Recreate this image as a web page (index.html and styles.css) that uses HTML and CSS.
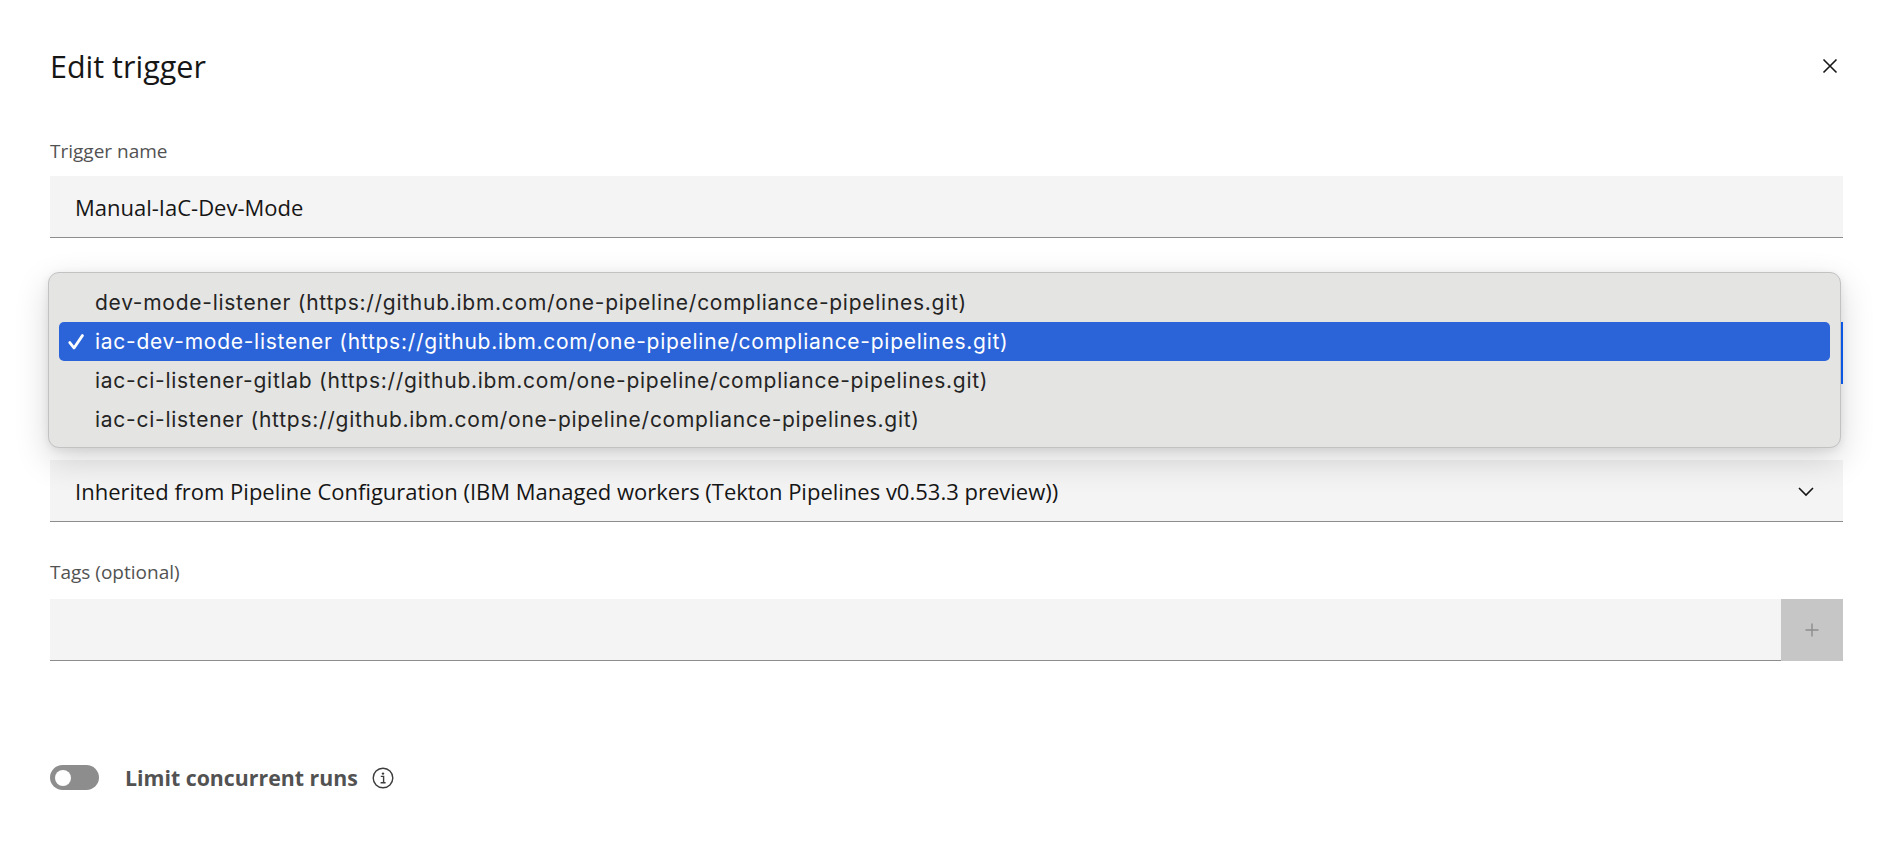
FILE: index.html
```html
<!DOCTYPE html>
<html lang="en">
<head>
<meta charset="utf-8">
<title>Edit trigger</title>
<link rel="stylesheet" href="styles.css">
</head>
<body>
<div class="panel">
  <header class="modal-header">
    <h2 class="title">Edit trigger</h2>
    <button class="close" aria-label="Close">
      <svg width="20" height="20" viewBox="0 0 20 20"><path d="M3.5 3.5 L16.5 16.5 M16.5 3.5 L3.5 16.5" stroke="#161616" stroke-width="1.6" fill="none"/></svg>
    </button>
  </header>

  <div class="group g1">
    <div class="label">Trigger name</div>
    <div class="input">Manual-IaC-Dev-Mode</div>
  </div>

  <div class="group g2">
    <div class="input focused"></div>
  </div>

  <div class="group g3">
    <div class="input select">
      <span>Inherited from Pipeline Configuration (IBM Managed workers (Tekton Pipelines v0.53.3 preview))</span>
      <svg class="chev" width="18" height="12" viewBox="0 0 18 12"><path d="M2 3 L9 10 L16 3" stroke="#161616" stroke-width="1.6" fill="none"/></svg>
    </div>
  </div>

  <div class="group g4">
    <div class="label">Tags (optional)</div>
    <div class="tags">
      <div class="input"></div>
      <button class="add" aria-label="Add tag">
        <svg width="16" height="16" viewBox="0 0 16 16"><path d="M8 1.5 V14.5 M1.5 8 H14.5" stroke="#8d8d8d" stroke-width="1.4" fill="none"/></svg>
      </button>
    </div>
  </div>

  <div class="toggle-row">
    <span class="toggle"><span class="knob"></span></span>
    <span class="toggle-label">Limit concurrent runs</span>
    <svg class="info" width="22" height="22" viewBox="0 0 22 22">
      <circle cx="11" cy="11" r="9.8" stroke="#3d3d3d" stroke-width="1.4" fill="none"/>
      <circle cx="11" cy="6.6" r="1.2" fill="#3d3d3d"/>
      <path d="M8.8 9.4 H11.6 V15.6 M8.6 15.8 H13.6" stroke="#3d3d3d" stroke-width="1.4" fill="none"/>
    </svg>
  </div>

  <div class="popup">
    <div class="option">dev-mode-listener (https://github.ibm.com/one-pipeline/compliance-pipelines.git)</div>
    <div class="option selected"><svg class="check" width="16" height="16" viewBox="0 0 16 16"><path d="M1.8 8.6 L6 14 L14.4 1.6" stroke="#ffffff" stroke-width="2.8" fill="none" stroke-linecap="round" stroke-linejoin="round"/></svg>iac-dev-mode-listener (https://github.ibm.com/one-pipeline/compliance-pipelines.git)</div>
    <div class="option">iac-ci-listener-gitlab (https://github.ibm.com/one-pipeline/compliance-pipelines.git)</div>
    <div class="option">iac-ci-listener (https://github.ibm.com/one-pipeline/compliance-pipelines.git)</div>
  </div>
</div>
</body>
</html>
```

FILE: styles.css
```css
* { box-sizing: border-box; }
html, body {
  margin: 0;
  padding: 0;
  background: #ffffff;
}
body {
  width: 1884px;
  height: 856px;
  overflow: hidden;
  font-family: "Open Sans", "Noto Sans", sans-serif;
  color: #161616;
}
.panel {
  position: relative;
  padding: 0 41px 0 50px;
  height: 856px;
}
.modal-header {
  display: flex;
  justify-content: space-between;
  align-items: flex-start;
  padding-top: 48px;
}
.title {
  margin: 0;
  font-size: 30.5px;
  line-height: 36px;
  font-weight: 400;
  color: #161616;
}
.close {
  margin: 8px 3px 0 0;
  padding: 0;
  border: 0;
  background: none;
  width: 20px;
  height: 20px;
  display: block;
}
.close svg { display: block; }

.label {
  font-size: 19px;
  line-height: 20px;
  color: #525252;
}
.input {
  height: 62px;
  background: #f4f4f4;
  border-bottom: 1px solid #8d8d8d;
  display: flex;
  align-items: center;
  padding-left: 25px;
  font-size: 22px;
  color: #161616;
}
.g1 { margin-top: 57px; }
.g1 .input { margin-top: 15px; }
.g2 { margin-top: 84px; }
.g2 .input.focused {
  outline: 2px solid #0f62fe;
  outline-offset: -2px;
}
.g3 { margin-top: 76px; }
.select {
  justify-content: space-between;
  padding-right: 28px;
}
.chev { display: block; }
.g4 { margin-top: 40px; }
.tags {
  display: flex;
  margin-top: 17px;
}
.tags .input { flex: 1; }
.add {
  width: 62px;
  height: 62px;
  border: 0;
  padding: 0;
  background: #c6c6c6;
  display: flex;
  align-items: center;
  justify-content: center;
}
.add svg { display: block; }

.toggle-row {
  margin-top: 104px;
  display: flex;
  align-items: center;
  height: 25px;
}
.toggle {
  width: 49px;
  height: 25px;
  border-radius: 13px;
  background: #8d8d8d;
  display: flex;
  align-items: center;
  padding-left: 5px;
}
.knob {
  width: 16px;
  height: 16px;
  border-radius: 50%;
  background: #ffffff;
}
.toggle-label {
  margin-left: 26px;
  font-size: 21.3px;
  font-weight: 700;
  color: #525252;
}
.info {
  margin-left: 14px;
  display: block;
}

.popup {
  position: absolute;
  top: 272px;
  left: 48px;
  width: 1793px;
  height: 176px;
  padding: 10px;
  background: #e4e4e3;
  border: 1px solid #c2c2c2;
  border-radius: 11px;
  box-shadow: 0 12px 34px rgba(0, 0, 0, 0.16), 0 2px 8px rgba(0, 0, 0, 0.08);
  font-family: Inter, "Liberation Sans", sans-serif;
  font-size: 21px;
  letter-spacing: 0.73px;
  color: #242424;
}
.option {
  height: 39px;
  display: flex;
  align-items: center;
  padding-left: 36px;
  position: relative;
  border-radius: 5px;
}
.option.selected {
  background: #2b64d9;
  color: #ffffff;
}
.check {
  position: absolute;
  left: 9px;
  top: 12px;
  display: block;
}
```
